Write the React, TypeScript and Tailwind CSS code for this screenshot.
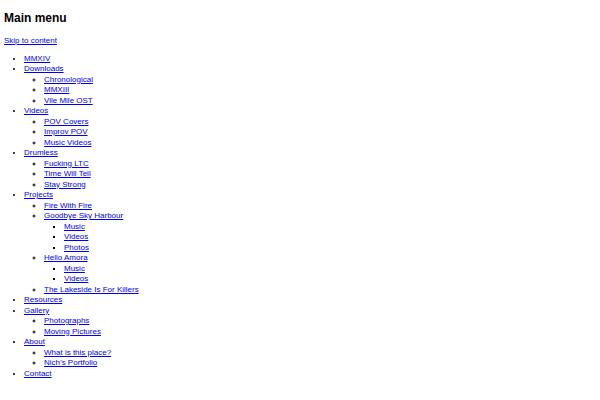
const menu: any[] = [
  { label: 'MMXIV' },
  { label: 'Downloads', children: [{ label: 'Chronological' }, { label: 'MMXIII' }, { label: 'Vile Mile OST' }] },
  { label: 'Videos', children: [{ label: 'POV Covers' }, { label: 'Improv POV' }, { label: 'Music Videos' }] },
  { label: 'Drumless', children: [{ label: 'Fucking LTC' }, { label: 'Time Will Tell' }, { label: 'Stay Strong' }] },
  {
    label: 'Projects',
    children: [
      { label: 'Fire With Fire' },
      { label: 'Goodbye Sky Harbour', children: [{ label: 'Music' }, { label: 'Videos' }, { label: 'Photos' }] },
      { label: 'Hello Amora', children: [{ label: 'Music' }, { label: 'Videos' }] },
      { label: 'The Lakeside Is For Killers' },
    ],
  },
  { label: 'Resources' },
  { label: 'Gallery', children: [{ label: 'Photographs' }, { label: 'Moving Pictures' }] },
  { label: 'About', children: [{ label: 'What is this place?' }, { label: 'Nich’s Portfolio' }] },
  { label: 'Contact' },
]

const listStyles = ['list-disc', 'list-[circle]', 'list-[square]']

function MenuList({ items, depth }: { items: any[]; depth: number }) {
  return (
    <ul className={`${listStyles[depth]} pl-[20px]`}>
      {items.map((item, i) => (
        <li key={i}>
          <a href="#" className="text-[#0000ee] underline">
            {item.label}
          </a>
          {item.children && <MenuList items={item.children} depth={depth + 1} />}
        </li>
      ))}
    </ul>
  )
}

export default function App() {
  return (
    <div className="min-h-[400px] bg-white px-[4px] pt-[10px] text-[8px] leading-[10.5px] text-black font-['Liberation_Sans',Arial,sans-serif]">
      <h2 className="text-[12px] font-bold leading-[16px]">Main menu</h2>
      <a href="#" className="mt-[10px] block w-fit text-[#0000ee] underline">
        Skip to content
      </a>
      <nav className="mt-[7px]">
        <MenuList items={menu} depth={0} />
      </nav>
    </div>
  )
}
